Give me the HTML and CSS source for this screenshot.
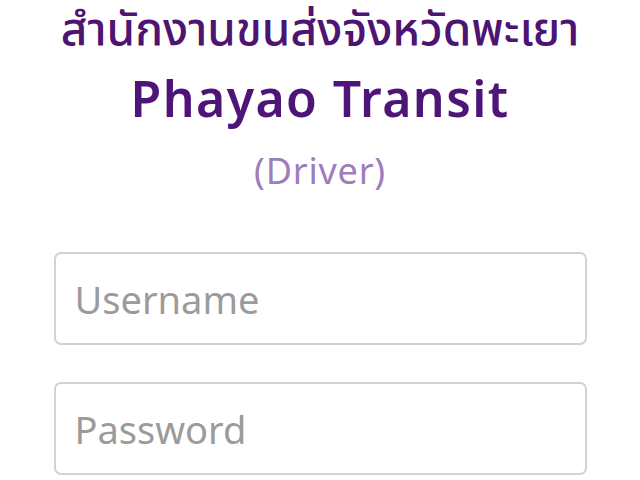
FILE: index.html
```html
<!DOCTYPE html>
<html lang="th">
<head>
<meta charset="utf-8">
<link rel="stylesheet" href="styles.css">
</head>
<body>
<div class="page">
  <header class="brand">
    <div class="org">สำนักงานขนส่งจังหวัดพะเยา</div>
    <div class="app">Phayao Transit</div>
    <div class="role">(Driver)</div>
  </header>
  <form class="form">
    <input class="field" type="text" placeholder="Username">
    <input class="field" type="password" placeholder="Password">
  </form>
</div>
</body>
</html>
```

FILE: styles.css
```css
html, body {
  margin: 0;
  padding: 0;
  background: #ffffff;
}
body {
  font-family: "Noto Sans", "Noto Sans Thai", "Noto Sans Thai UI", sans-serif;
  width: 640px;
  height: 480px;
  overflow: hidden;
}
.page {
  display: flex;
  flex-direction: column;
  align-items: center;
  padding-top: 1px;
}
.brand {
  display: flex;
  flex-direction: column;
  align-items: center;
}
.org {
  font-size: 46px;
  line-height: 52px;
  color: #4d1472;
  font-weight: 500;
  white-space: nowrap;
}
.app {
  font-size: 50px;
  line-height: 60px;
  margin-top: 15px;
  color: #4e1478;
  font-weight: 560;
  letter-spacing: 1.4px;
  white-space: nowrap;
}
.role {
  font-size: 36px;
  line-height: 44px;
  margin-top: 21px;
  color: #9d7dbb;
  letter-spacing: 0.8px;
}
.form {
  display: flex;
  flex-direction: column;
  gap: 37px;
  margin-top: 59px;
  width: 533px;
}
.field {
  box-sizing: border-box;
  height: 93px;
  width: 100%;
  border: 2px solid #d2d2d2;
  border-radius: 7px;
  padding: 0 19px;
  font-family: inherit;
  font-size: 38px;
  color: #333;
  outline: none;
  background: #fff;
}
.field::placeholder {
  color: #9b9b9b;
}
```
